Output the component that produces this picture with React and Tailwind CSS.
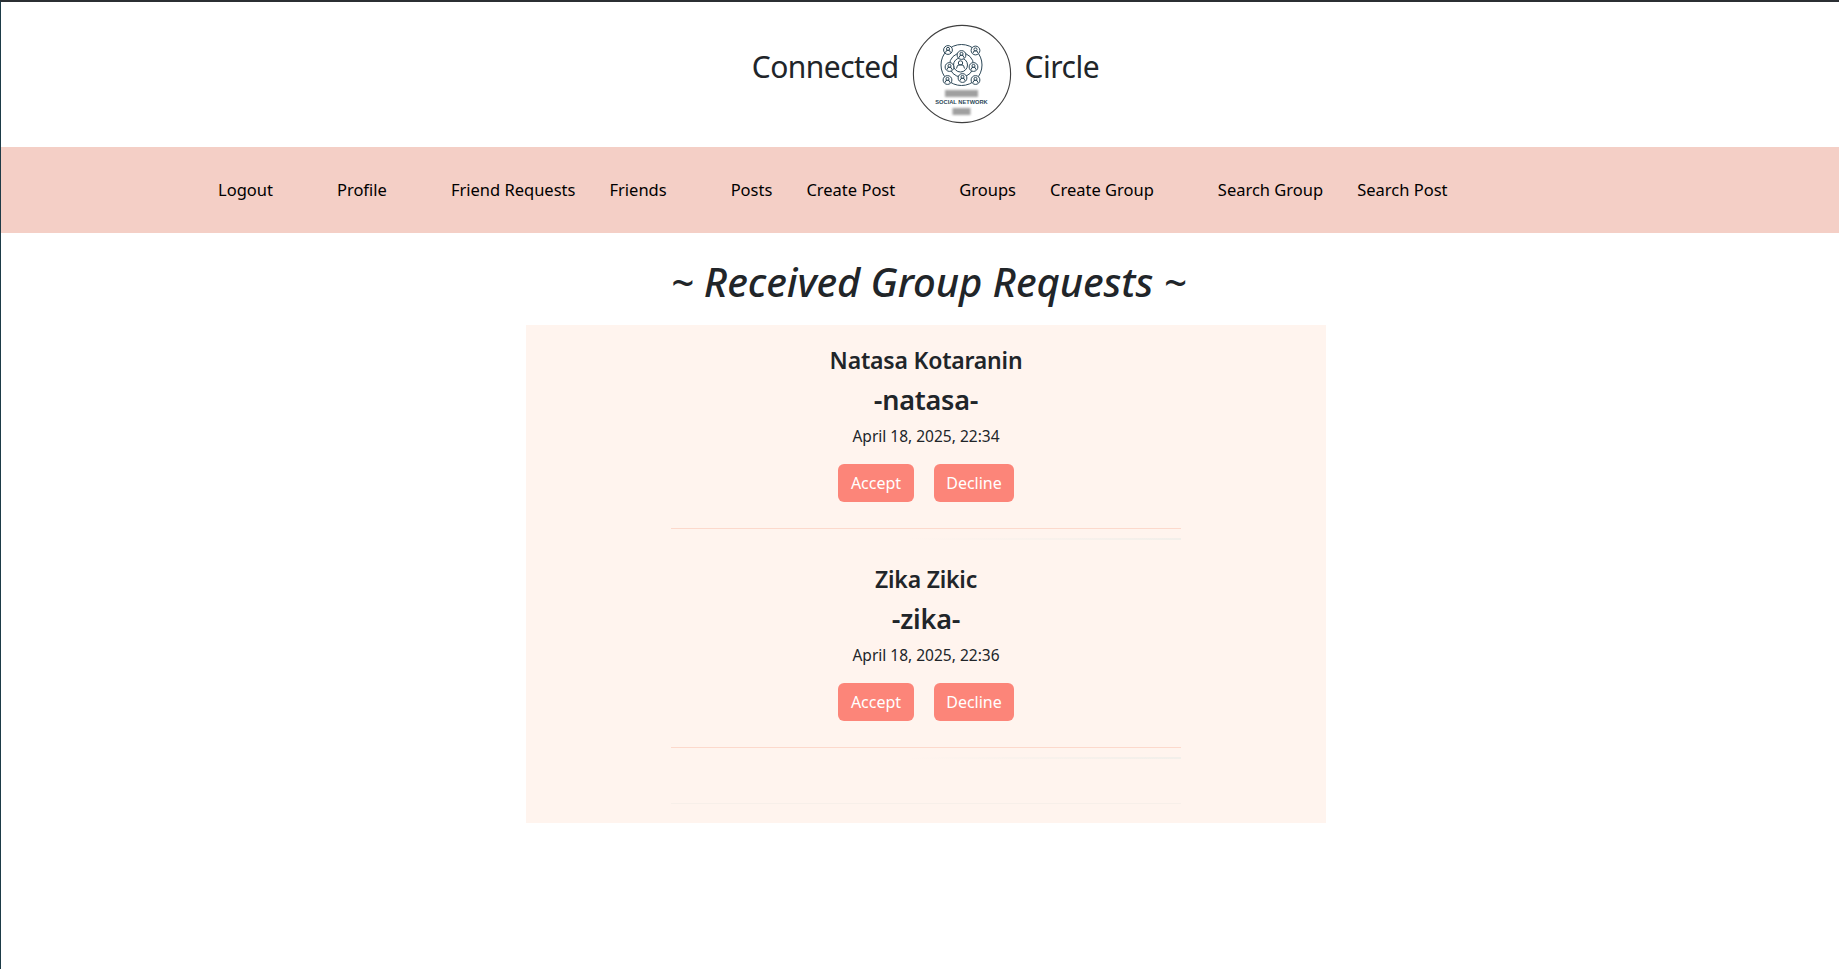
import React from 'react';

const navLinks = [
  { label: 'Logout', gap: true },
  { label: 'Profile', gap: true },
  { label: 'Friend Requests', gap: false },
  { label: 'Friends', gap: true },
  { label: 'Posts', gap: false },
  { label: 'Create Post', gap: true },
  { label: 'Groups', gap: false },
  { label: 'Create Group', gap: true },
  { label: 'Search Group', gap: false },
  { label: 'Search Post', gap: false }
];

const requests = [
  { name: 'Natasa Kotaranin', username: '-natasa-', date: 'April 18, 2025, 22:34' },
  { name: 'Zika Zikic', username: '-zika-', date: 'April 18, 2025, 22:36' }
];

function Node({ x, y, r = 4.4 }) {
  return (
    <g transform={`translate(${x} ${y})`}>
      <circle r={r} fill="#fff" />
      <circle cy={-r * 0.25} r={r * 0.35} />
      <path d={`M${-r * 0.55} ${r * 0.6}a${r * 0.55} ${r * 0.55} 0 0 1 ${r * 1.1} 0`} />
    </g>
  );
}

function Logo() {
  const outer = [[-13.5, -15], [14, -14.5], [-14, 15], [14, 15]];
  const inner = [[0, -10], [-12, 2], [12, 2], [1, 13]];
  return (
    <svg width="100" height="100" viewBox="0 0 100 100" className="shrink-0">
      <circle cx="50" cy="50" r="48.6" fill="#fff" stroke="#3f3f3f" strokeWidth="1.1" />
      <g transform="translate(49.5 41)" fill="none" stroke="#2c4757" strokeWidth="1">
        <circle r="20.5" />
        <circle r="12" />
        <circle cx="-1" r="7" />
        <circle cx="-1" cy="-2" r="2.2" />
        <path d="M-5 3.5a4 4 0 0 1 8 0" />
        {outer.map(([x, y]) => <Node key={`${x}-${y}`} x={x} y={y} />)}
        {inner.map(([x, y]) => <Node key={`${x}-${y}`} x={x} y={y} />)}
      </g>
      <rect x="33" y="66" width="33" height="7" fill="#a0a0a0" className="blur-[1px]" />
      <text x="49.5" y="79.5" textAnchor="middle" fontSize="5.7" fontWeight="700" fill="#2c4757" fontFamily="'Liberation Sans', sans-serif">SOCIAL NETWORK</text>
      <rect x="40.5" y="84" width="18" height="7" fill="#a0a0a0" className="blur-[1px]" />
    </svg>
  );
}

export default function App() {
  return (
    <div className="min-h-[969px] bg-white border-t-2 border-t-[#2b2f33] border-l border-l-[#1d3b47] font-['Noto_Sans',sans-serif] text-[#212529]">
      <header className="h-[145px] flex items-center justify-center pl-[11px] pb-[1px]">
        <span className="text-[30px] leading-none mb-[14px] tracking-[-0.55px] mr-[13px]">Connected</span>
        <Logo />
        <span className="text-[30px] leading-none mb-[14px] tracking-[-0.5px] ml-[13px]">Circle</span>
      </header>

      <nav className="h-[86px] bg-[#f4cfc6] flex items-center pl-[200px] text-[16.5px] text-black">
        {navLinks.map((link) => (
          <a key={link.label} href="#" className={`px-[17px] ${link.gap ? 'mr-[30px]' : ''}`}>
            {link.label}
          </a>
        ))}
      </nav>

      <h1 className="mt-[25px] ml-[525px] w-[805px] h-[67px] text-center text-[40px] leading-[48px] italic font-medium tracking-[-0.1px]">
        ~ Received Group Requests ~
      </h1>

      <main className="ml-[525px] w-[800px] h-[498px] bg-[#fff4ee] pt-[21px] flex flex-col items-center">
        {requests.map((req) => (
          <section key={req.username} className="w-[510px] h-[219px] text-center">
            <h3 className="text-[23px] leading-[29px] font-semibold tracking-[-0.2px]">{req.name}</h3>
            <h2 className="mt-[8px] text-[27px] leading-[34px] font-semibold tracking-[-0.2px]">{req.username}</h2>
            <p className="mt-[7px] text-[15.5px] leading-[24px]">{req.date}</p>
            <div className="mt-[16px] flex justify-center gap-[20px]">
              <button className="w-[76px] h-[38px] rounded-md bg-[#fc8579] text-white text-[16px]">Accept</button>
              <button className="w-[80px] h-[38px] rounded-md bg-[#fc8579] text-white text-[16px]">Decline</button>
            </div>
            <hr className="mt-[26px] border-0 border-t border-t-[#fcd9cc]" />
            <hr className="mt-[9px] ml-auto w-[274px] border-0 h-[2px] bg-gradient-to-r from-[#fff4ee] to-[#f2efea]" />
          </section>
        ))}
        <hr className="w-[510px] mt-[19px] border-0 border-t border-t-[#f7efe9]" />
      </main>
    </div>
  );
}
